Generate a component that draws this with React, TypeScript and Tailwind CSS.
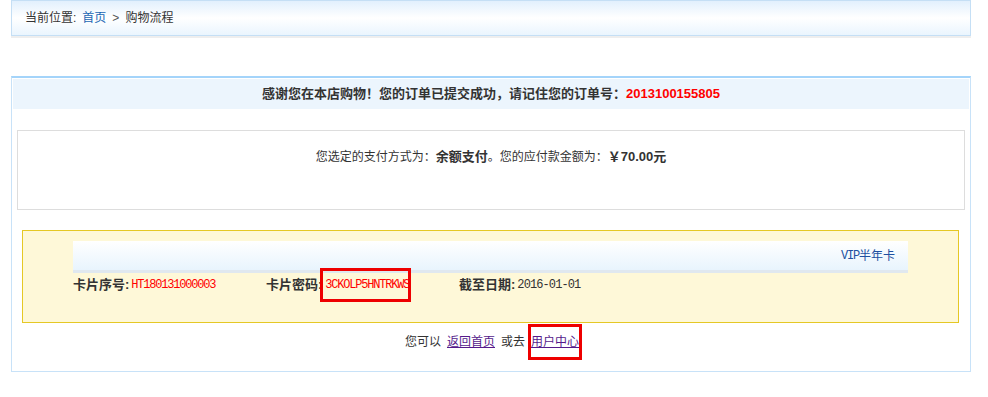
const cjk = { fontFamily: '"Liberation Sans", "Noto Sans CJK SC", sans-serif' };
const mono = { fontFamily: '"Liberation Mono", "Noto Sans CJK SC", monospace' };

export default function App() {
  return (
    <div className="min-h-screen bg-white text-[12px] text-[#333]" style={cjk}>
      {/* 面包屑 */}
      <div className="ml-[11px] w-[960px]">
        <div className="flex h-[36px] items-center border border-[#c5dff5] bg-gradient-to-b from-[#e2f0fd] via-white to-[#eaf5fe] pl-[13px]">
          <span>当前位置:</span>
          <a className="ml-[6px] text-[#1a66b3]">首页</a>
          <span className="mx-[6px] text-[#555]">&gt;</span>
          <span>购物流程</span>
        </div>
        <div className="h-[2px] bg-[#eeeeee]" />
      </div>

      {/* 订单信息 */}
      <div className="ml-[11px] mt-[38px] w-[960px] border border-t-2 border-[#c8e2f8] border-t-[#a4d4fa] p-px pb-[22px]">
        <div className="flex h-[30px] items-center justify-center bg-[#ecf5fd] text-[13px] font-bold">
          感谢您在本店购物！您的订单已提交成功，请记住您的订单号：
          <span className="text-[#ff0000]">2013100155805</span>
        </div>

        <div className="mx-[4px] mt-[21px] h-[80px] border border-[#dddddd] pt-[16px] text-center">
          您选定的支付方式为：<b className="text-[13px]">余额支付</b>。您的应付款金额为：
          <b className="text-[13px]">￥70.00元</b>
        </div>

        <div className="ml-[9px] mr-[10px] mt-[20px] h-[93px] border border-[#e5c825] bg-[#fef8d8] px-[50px] pt-[10px]">
          <div className="flex h-[32px] items-center justify-end border-b-[3px] border-[#e0e8ef] bg-gradient-to-b from-white to-[#e8f4fd] pr-[13px] text-[#2050a0]">
            <span className="text-[12px] tracking-[-1.2px]" style={mono}>VIP</span>
            <span className="text-[12px]">半年卡</span>
          </div>
          <div className="mt-[3px] flex h-[18px] items-center">
            <div className="flex w-[193px] items-center">
              <b className="text-[13px]">卡片序号:</b>
              <span className="ml-[2px] text-[12px] tracking-[-1.2px] text-[#ff0000]" style={mono}>HT180131000003</span>
            </div>
            <div className="flex w-[193px] items-center">
              <b className="text-[13px]">卡片密码:</b>
              <span className="relative ml-[3px] text-[12px] tracking-[-1.2px] text-[#ff0000]" style={mono}>
                3CKOLP5HNTRKWS
                <span className="absolute left-[-5px] right-[-2px] top-[-8px] bottom-[-8px] border-[3px] border-[#ee0000]" />
              </span>
            </div>
            <div className="flex items-center">
              <b className="text-[13px]">截至日期:</b>
              <span className="ml-[2px] text-[12px] tracking-[-0.9px] text-[#333]" style={mono}>2016-01-01</span>
            </div>
          </div>
        </div>

        <div className="mt-[12px] flex h-[14px] items-center justify-center pl-[2px]">
          <span>您可以</span>
          <a className="ml-[6px] text-[#551a8b] underline">返回首页</a>
          <span className="ml-[6px]">或去</span>
          <a className="relative ml-[6px] text-[#551a8b] underline">
            用户中心
            <span className="absolute left-[-3px] right-[-3px] top-[-9px] bottom-[-9px] border-[3px] border-[#ee0000]" />
          </a>
        </div>
      </div>
    </div>
  );
}
